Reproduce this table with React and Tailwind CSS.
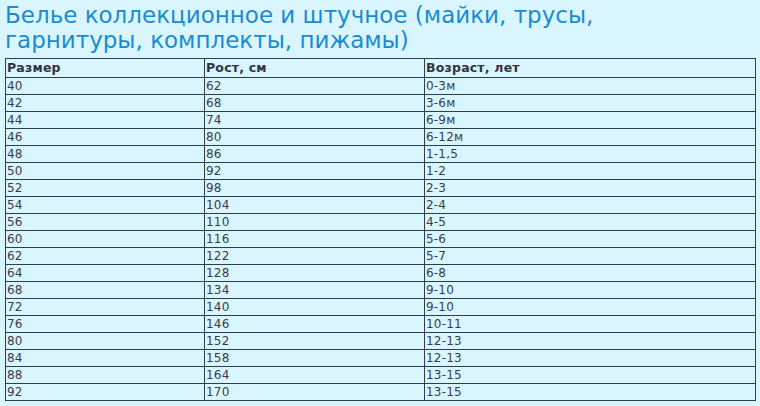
import React from "react";

const rows = [
  ["40", "62", "0-3м"],
  ["42", "68", "3-6м"],
  ["44", "74", "6-9м"],
  ["46", "80", "6-12м"],
  ["48", "86", "1-1,5"],
  ["50", "92", "1-2"],
  ["52", "98", "2-3"],
  ["54", "104", "2-4"],
  ["56", "110", "4-5"],
  ["60", "116", "5-6"],
  ["62", "122", "5-7"],
  ["64", "128", "6-8"],
  ["68", "134", "9-10"],
  ["72", "140", "9-10"],
  ["76", "146", "10-11"],
  ["80", "152", "12-13"],
  ["84", "158", "12-13"],
  ["88", "164", "13-15"],
  ["92", "170", "13-15"],
];

export default function App() {
  return (
    <div
      className="w-[760px] h-[406px] bg-[#d9f6fe] overflow-hidden px-[5px] pt-[3px]"
      style={{ fontFamily: '"DejaVu Sans", Verdana, sans-serif' }}
    >
      <h1 className="text-[23px] leading-[25px] font-normal text-[#1a8bd3] mb-[5px] whitespace-nowrap">
        Белье коллекционное и штучное (майки, трусы,
        <br />
        гарнитуры, комплекты, пижамы)
      </h1>
      <table className="table-fixed border-collapse w-[750px] text-[12px] tracking-[0.2px] text-[#3b3b4a]">
        <colgroup>
          <col className="w-[199px]" />
          <col className="w-[220px]" />
          <col className="w-[331px]" />
        </colgroup>
        <thead>
          <tr>
            {["Размер", "Рост, см", "Возраст, лет"].map((h) => (
              <th
                key={h}
                className="border border-[#2e3d4c] text-left font-bold text-[12.5px] text-[#333340] px-[1px] py-0 leading-[18px] h-[19px]"
              >
                {h}
              </th>
            ))}
          </tr>
        </thead>
        <tbody>
          {rows.map((r, i) => (
            <tr key={i}>
              {r.map((c, j) => (
                <td
                  key={j}
                  className="border border-[#2e3d4c] px-[1px] py-0 leading-[16px] h-[17px]"
                >
                  {c}
                </td>
              ))}
            </tr>
          ))}
        </tbody>
      </table>
    </div>
  );
}
